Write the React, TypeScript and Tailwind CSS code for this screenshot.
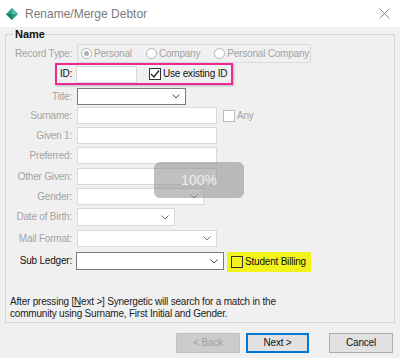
function Chevron({ dark = false }: { dark?: boolean }) {
  return (
    <svg width="8" height="5" viewBox="0 0 8 5" className="shrink-0">
      <polyline points="0.5,0.5 4,4 7.5,0.5" fill="none" stroke={dark ? "#444" : "#777"} strokeWidth="1" />
    </svg>
  );
}

function Label({ children, dark = false }: { children: React.ReactNode; dark?: boolean }) {
  return (
    <div className={`w-[66px] shrink-0 text-right pr-[1px] whitespace-nowrap ${dark ? "text-[#111]" : "text-[#a3a3a3]"}`}>
      {children}
    </div>
  );
}

function Box({ w, h = "h-[17px]", combo = false, dark = false }: { w: string; h?: string; combo?: boolean; dark?: boolean }) {
  return (
    <div
      className={`${w} ${h} bg-white border ${dark ? "border-[#7a7a7a]" : "border-[#d9d9d9]"} flex items-center justify-end pr-[5px]`}
    >
      {combo && <Chevron dark={dark} />}
    </div>
  );
}

function Radio({ label, checked = false }: { label: string; checked?: boolean }) {
  return (
    <div className="flex items-center gap-[2px] whitespace-nowrap">
      <div className="w-[11px] h-[11px] rounded-full border border-[#b5b5b5] bg-white flex items-center justify-center">
        {checked && <div className="w-[5px] h-[5px] rounded-full bg-[#b0b0b0]" />}
      </div>
      <span className="text-[#a3a3a3]">{label}</span>
    </div>
  );
}

function Check({ checked = false, dark = true, bg = "bg-white" }: { checked?: boolean; dark?: boolean; bg?: string }) {
  return (
    <div className={`w-[12px] h-[12px] shrink-0 border ${dark ? "border-[#333]" : "border-[#bdbdbd]"} ${bg} flex items-center justify-center`}>
      {checked && (
        <svg width="10" height="10" viewBox="0 0 10 10">
          <polyline points="1,5 4,8 9,1.5" fill="none" stroke="#222" strokeWidth="1.3" />
        </svg>
      )}
    </div>
  );
}

export default function App() {
  return (
    <div className="w-[400px] h-[358px] bg-[#f0f0f0] relative overflow-hidden text-[10px] tracking-[-0.2px] leading-none font-['Liberation_Sans',Arial,sans-serif]">
      {/* title bar */}
      <div className="h-[27px] bg-white flex items-center pl-[6px] pr-[10px]">
        <svg width="12" height="12" viewBox="0 0 12 12">
          <polygon points="6,0 12,6 6,12 0,6" fill="#2f9e8c" />
          <polygon points="6,0 12,6 6,6" fill="#4fc0ac" />
          <polygon points="0,6 6,12 6,6" fill="#1f7a6a" />
        </svg>
        <span className="ml-[7px] text-[12px] tracking-normal text-[#7a7a7a]">Rename/Merge Debtor</span>
        <svg width="11" height="11" viewBox="0 0 11 11" className="ml-auto">
          <path d="M0.5 0.5 L10.5 10.5 M10.5 0.5 L0.5 10.5" stroke="#888" strokeWidth="1" />
        </svg>
      </div>

      <fieldset className="mx-[5px] border border-[#d8d8d8] pl-[1px] pb-[2px]">
        <legend className="ml-[7px] px-[1px] font-bold text-[11px] tracking-normal text-[#111] leading-[14px]">Name</legend>

        {/* record type */}
        <div className="flex items-center mt-[3px]">
          <Label>Record Type:</Label>
          <div className="ml-[4px] w-[234px] h-[19px] border border-[#dadada] flex items-center pl-[3px]">
            <Radio label="Personal" checked />
            <div className="ml-[14px]">
              <Radio label="Company" />
            </div>
            <div className="ml-[14px]">
              <Radio label="Personal Company" />
            </div>
          </div>
        </div>

        {/* id */}
        <div className="flex">
          <div className="ml-[48px] w-[178px] h-[22px] border-2 border-[#ec2a90] shadow-[1px_1px_2px_rgba(0,0,0,0.25)] flex items-center whitespace-nowrap">
            <span className="ml-[3px] w-[12px] text-[#111]">ID:</span>
            <div className="ml-[4px] w-[61px] h-[17px] bg-white border border-[#d9d9d9]" />
            <div className="ml-[12px]">
              <Check checked />
            </div>
            <span className="ml-[2px] text-[#111]">Use existing ID</span>
          </div>
        </div>

        <div className="flex items-center mt-[3px]">
          <Label>Title:</Label>
          <div className="ml-[4px]">
            <Box w="w-[109px]" combo dark />
          </div>
        </div>

        <div className="flex items-center mt-[2px]">
          <Label>Surname:</Label>
          <div className="ml-[4px]">
            <Box w="w-[140px]" />
          </div>
          <div className="ml-[6px]">
            <Check dark={false} />
          </div>
          <span className="ml-[2px] text-[#a3a3a3]">Any</span>
        </div>

        <div className="flex items-center mt-[3px]">
          <Label>Given 1:</Label>
          <div className="ml-[4px]">
            <Box w="w-[140px]" />
          </div>
        </div>

        <div className="flex items-center mt-[3px]">
          <Label>Preferred:</Label>
          <div className="ml-[4px]">
            <Box w="w-[140px]" />
          </div>
        </div>

        <div className="flex items-center mt-[4px]">
          <Label>Other Given:</Label>
          <div className="ml-[4px]">
            <Box w="w-[140px]" />
          </div>
        </div>

        <div className="flex items-center mt-[3px]">
          <Label>Gender:</Label>
          <div className="ml-[4px]">
            <Box w="w-[127px]" combo />
          </div>
        </div>

        <div className="flex items-center mt-[3px]">
          <Label>Date of Birth:</Label>
          <div className="ml-[4px]">
            <Box w="w-[98px]" h="h-[18px]" combo />
          </div>
        </div>

        <div className="flex items-center mt-[4px]">
          <Label>Mail Format:</Label>
          <div className="ml-[4px]">
            <Box w="w-[140px]" combo />
          </div>
        </div>

        <div className="flex items-start mt-[5px]">
          <div className="h-[18px] flex items-center">
            <Label dark>Sub Ledger:</Label>
          </div>
          <div className="ml-[3px]">
            <Box w="w-[148px]" h="h-[18px]" combo dark />
          </div>
          <div className="ml-[3px] w-[84px] h-[20px] bg-[#f3f31c] flex items-center pl-[4px] whitespace-nowrap">
            <Check bg="bg-transparent" />
            <span className="ml-[2px] text-[#111]">Student Billing</span>
          </div>
        </div>

        <div className="mt-[24px] ml-[3px] text-[#222] leading-[12px] whitespace-nowrap">
          <div>
            After pressing [<span className="underline">N</span>ext &gt;] Synergetic will search for a match in the
          </div>
          <div>community using Surname, First Initial and Gender.</div>
        </div>
      </fieldset>

      {/* buttons */}
      <div className="flex justify-end items-center mt-[10px] pr-[7px]">
        <div className="w-[64px] h-[20px] bg-[#cccccc] border border-[#bfbfbf] flex items-center justify-center text-[#a0a0a0]">
          &lt; Back
        </div>
        <div className="ml-[6px] w-[63px] h-[20px] bg-[#e1e1e1] border-2 border-[#0078d7] flex items-center justify-center text-[#111]">
          Next &gt;
        </div>
        <div className="ml-[20px] w-[64px] h-[20px] bg-[#e1e1e1] border border-[#adadad] flex items-center justify-center text-[#111]">
          Cancel
        </div>
      </div>

      {/* progress overlay */}
      <div className="absolute left-[154px] top-[162px] w-[90px] h-[36px] rounded-[6px] bg-[rgba(140,140,140,0.55)] flex items-center justify-center text-[#ececec] text-[14px] tracking-normal">
        100%
      </div>
    </div>
  );
}
